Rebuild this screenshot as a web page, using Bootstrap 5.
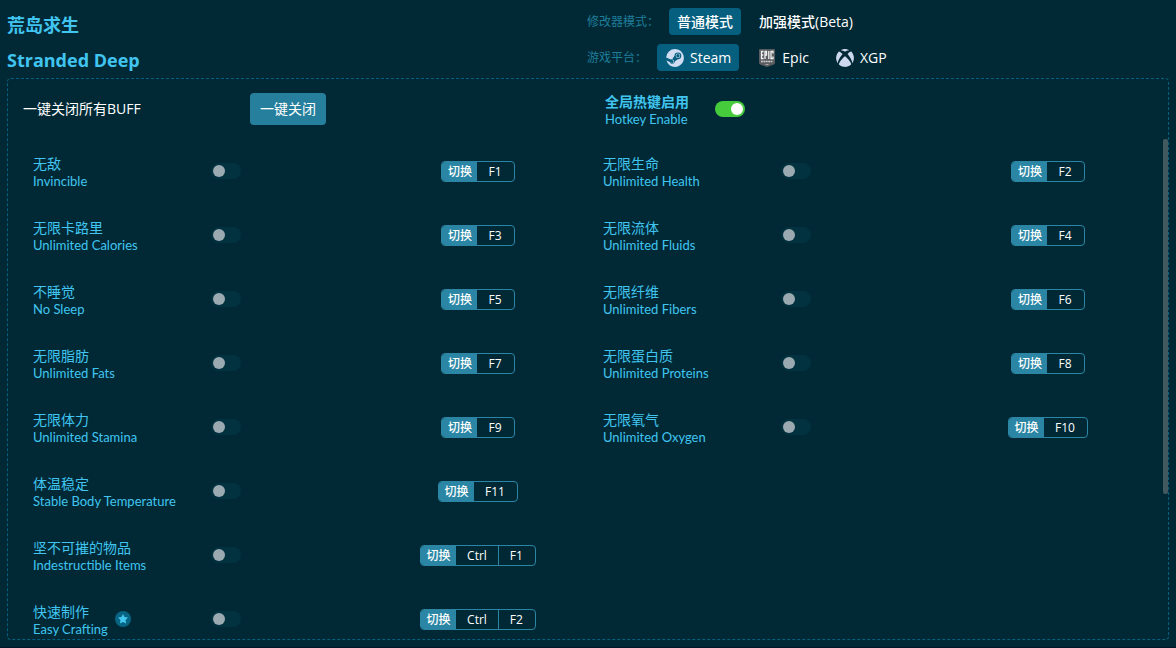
<!DOCTYPE html>
<html lang="zh-CN">
<head>
<meta charset="utf-8">
<meta name="viewport" content="width=device-width, initial-scale=1">
<title>荒岛求生 Stranded Deep</title>
<link href="https://cdn.jsdelivr.net/npm/bootstrap@5.3.0/dist/css/bootstrap.min.css" rel="stylesheet">
<style>
:root { --ink: #002935; --sky: #41c5f0; --deep: #065f7f; --teal: #267f9d; }
body { background: var(--ink); color: #fff; font: 14px/20px "Open Sans", "Noto Sans CJK SC", sans-serif; }
.shell { height: 100vh; padding: 8px 7px 7px; border-bottom: 1px solid #001626; }
.top-bar { padding-right: 2px; }
.game-title { color: var(--sky); font-weight: 700; line-height: 35px; margin: 0; font-size: 18px; }
.picker-col { gap: 9px; }
.picker { gap: 10px; border: 0; height: 27px; }
.picker-name { color: #1f7d9a; font-size: 12px; }
.pick { --bs-btn-padding-x: 8px; --bs-btn-padding-y: 0; --bs-btn-font-size: 14px; --bs-btn-line-height: 27px;
  --bs-btn-color: #fff; --bs-btn-border-width: 0; --bs-btn-hover-color: #fff; --bs-btn-active-bg: var(--deep); --bs-btn-active-color: #fff;
  --bs-btn-border-radius: 4px; font-weight: 500; height: 27px; display: inline-flex; align-items: center; gap: 5px; }
.pick svg { width: 20px; height: 20px; }
.panel { border: 1px dashed var(--deep); border-radius: 4px; min-height: 0; }
.panel-head { height: 60px; }
.close-name { padding-left: 15px; width: 242px; }
.close-btn { --bs-btn-bg: var(--teal); --bs-btn-color: #fff; --bs-btn-hover-bg: #3191b1; --bs-btn-hover-color: #fff; --bs-btn-border-width: 0;
  --bs-btn-padding-x: 10px; --bs-btn-padding-y: 0; --bs-btn-font-size: 14px; --bs-btn-line-height: 32px; --bs-btn-border-radius: 4px; }
.hot-name { padding-left: 17px; width: 127px; }
.label-pair { color: var(--sky); font-family: Lato, "Noto Sans CJK SC", sans-serif; line-height: 18px; font-size: 13px; padding-top: 3px; }
.label-pair b, .label-pair i { display: block; font-style: normal; font-size: 14px; line-height: 17px; }
.label-pair i { font-weight: 400; }
.list-area { min-height: 0; padding-right: 20px; }
.cheat { height: 64px; padding-left: 25px; }
.cheat-name { width: 178px; gap: 7px; }
.keys-cell { width: 200px; }
.toggle.form-check-input { float: none; width: 30px; height: 16px; margin: 0; border: 0; border-radius: 8px; background-color: #02323f; flex: none;
  --bs-form-switch-bg: url("data:image/svg+xml,%3csvg xmlns='http://www.w3.org/2000/svg' viewBox='-4 -4 8 8'%3e%3ccircle r='3' fill='%239aaab0'/%3e%3c/svg%3e"); }
.toggle.form-check-input:checked { background-color: #45cb3b;
  --bs-form-switch-bg: url("data:image/svg+xml,%3csvg xmlns='http://www.w3.org/2000/svg' viewBox='-4 -4 8 8'%3e%3ccircle r='3' fill='%23fff'/%3e%3c/svg%3e"); }
.hotkey { display: inline-flex; padding: 0; height: 21px; border: 1px solid #2a86a4; border-radius: 4px; background: none; overflow: hidden;
  color: #fff; font-size: 12px; line-height: 19px; font-weight: 500; }
.hotkey span { padding: 0 12px 0 11px; }
.hotkey span:first-child { background: #2a86a4; width: 35px; padding: 0; text-align: center; }
.hotkey span:nth-child(3) { border-left: 1px solid #2a86a4; }
.hotkey.combo span:nth-child(2) { padding: 0 11px; }
.star-badge { width: 16px; height: 16px; }
.scroll-thumb { right: 0; top: 60px; width: 5px; height: 355px; border-radius: 2px; background: #42595f; }
</style>
</head>
<body>
<div class="shell d-flex flex-column">
  <header class="top-bar row g-0">
    <div class="col-6">
      <h1 class="game-title">荒岛求生</h1>
      <h2 class="game-title">Stranded Deep</h2>
    </div>
    <div class="picker-col col-6 d-flex flex-column">
      <div class="picker d-flex align-items-center" role="group" aria-label="修改器模式">
        <span class="picker-name">修改器模式：</span>
        <div><input class="btn-check" type="radio" name="mode" id="m1" checked><label class="btn pick" for="m1">普通模式</label></div>
        <div><input class="btn-check" type="radio" name="mode" id="m2"><label class="btn pick" for="m2">加强模式(Beta)</label></div>
      </div>
      <div class="picker d-flex align-items-center" role="group" aria-label="游戏平台">
        <span class="picker-name">游戏平台：</span>
        <div><input class="btn-check" type="radio" name="plat" id="p1" checked><label class="btn pick" for="p1">
          <svg viewBox="-1 -1 18 18" fill="#cfdcf1"><path d="M.329 10.333A8.01 8.01 0 0 0 7.99 16C12.414 16 16 12.418 16 8s-3.586-8-8.009-8A8.006 8.006 0 0 0 0 7.468l.003.006 4.304 1.769A2.198 2.198 0 0 1 5.62 8.88l1.96-2.844-.001-.04a3.046 3.046 0 0 1 3.042-3.043 3.046 3.046 0 0 1 3.042 3.043 3.047 3.047 0 0 1-3.111 3.044l-2.804 2a2.223 2.223 0 0 1-3.075 2.11 2.217 2.217 0 0 1-1.312-1.568L.33 10.333Z"/><path d="M4.868 12.683a1.715 1.715 0 0 0 1.318-3.165 1.705 1.705 0 0 0-1.263-.02l1.023.424a1.261 1.261 0 1 1-.97 2.33l-.99-.41a1.7 1.7 0 0 0 .882.84Zm3.726-6.687a2.03 2.03 0 0 0 2.027 2.029 2.03 2.03 0 0 0 2.027-2.029 2.03 2.03 0 0 0-2.027-2.027 2.03 2.03 0 0 0-2.027 2.027m2.03-1.527a1.524 1.524 0 1 1-.002 3.048 1.524 1.524 0 0 1 .002-3.048"/></svg>Steam</label></div>
        <div><input class="btn-check" type="radio" name="plat" id="p2"><label class="btn pick" for="p2">
          <svg viewBox="0 0 20 20"><path d="M3 1h14q1 0 1 1v13q0 1-1 1.400L10 19l-7-2.600Q2 16 2 15V2q0-1 1-1Z" fill="#5a5d60"/><g fill="none" stroke="#f2f2f2" stroke-width="1.300"><path d="M6.500 3.500H4.500v7h2M4.500 7h1.800M8 11V3.500h1.500v3.700H8M11.800 3v8M16 5.500v-2h-2v7h2v-2"/></g><path d="M4 13.500h12" stroke="#d0d0d0" stroke-width="1.400" stroke-dasharray="1.800 .6"/><path d="M7.500 16h5L10 17Z" fill="#bbb"/></svg>Epic</label></div>
        <div><input class="btn-check" type="radio" name="plat" id="p3"><label class="btn pick" for="p3">
          <svg viewBox="-1 -1 18 18" fill="#cdd8ee"><path d="M7.202 15.967a8 8 0 0 1-3.552-1.26c-.898-.585-1.101-.826-1.101-1.306 0-.965 1.062-2.656 2.879-4.583C6.459 7.723 7.897 6.44 8.052 6.475c.302.068 2.718 2.423 3.622 3.531 1.43 1.753 2.088 3.189 1.754 3.829-.254.486-1.83 1.437-2.987 1.802-.954.301-2.207.429-3.239.33m-5.866-3.57C.589 11.253.212 10.127.03 8.497c-.06-.539-.038-.846.137-1.95.218-1.377 1.002-2.97 1.945-3.95.401-.417.437-.427.926-.263.595.2 1.23.638 2.213 1.528l.574.519-.313.385C4.056 6.553 2.52 9.086 1.94 10.653c-.315.852-.442 1.707-.306 2.063.091.24.007.15-.3-.319Zm13.101.195c.074-.36-.019-1.02-.238-1.687-.473-1.443-2.055-4.128-3.508-5.953l-.457-.575.494-.454c.646-.593 1.095-.948 1.58-1.25.381-.237.927-.448 1.161-.448.145 0 .654.528 1.065 1.104a8.4 8.4 0 0 1 1.343 3.102c.153.728.166 2.286.024 3.012a9.5 9.5 0 0 1-.6 1.893c-.179.393-.624 1.156-.82 1.404-.1.128-.1.127-.043-.148ZM7.335 1.952c-.67-.34-1.704-.705-2.276-.803a4 4 0 0 0-.759-.043c-.471.024-.45 0 .306-.358A7.8 7.8 0 0 1 6.47.128c.8-.169 2.306-.17 3.094-.005.85.18 1.853.552 2.418.9l.168.103-.385-.02c-.766-.038-1.88.27-3.078.853-.361.176-.676.316-.699.312a12 12 0 0 1-.654-.319Z"/></svg>XGP</label></div>
      </div>
    </div>
  </header>

  <main class="panel position-relative flex-grow-1 d-flex flex-column">
    <div class="panel-head row g-0 flex-shrink-0">
      <div class="col-6 d-flex align-items-center">
        <span class="close-name">一键关闭所有BUFF</span>
        <button type="button" class="btn close-btn">一键关闭</button>
      </div>
      <div class="col-6 d-flex align-items-center form-switch ps-0">
        <label class="hot-name label-pair" for="hk"><b>全局热键启用</b>Hotkey Enable</label>
        <input class="form-check-input toggle" type="checkbox" role="switch" id="hk" checked>
      </div>
    </div>
    <div class="list-area row g-0 flex-grow-1 overflow-hidden">
      <div class="col-6">
        <div class="cheat form-switch d-flex align-items-center"><div class="cheat-name d-flex align-items-center"><label class="label-pair" for="c1"><i>无敌</i>Invincible</label></div><input class="form-check-input toggle" type="checkbox" role="switch" id="c1"><div class="keys-cell ms-auto text-center"><button type="button" class="hotkey"><span>切换</span><span>F1</span></button></div></div>
        <div class="cheat form-switch d-flex align-items-center"><div class="cheat-name d-flex align-items-center"><label class="label-pair" for="c3"><i>无限卡路里</i>Unlimited Calories</label></div><input class="form-check-input toggle" type="checkbox" role="switch" id="c3"><div class="keys-cell ms-auto text-center"><button type="button" class="hotkey"><span>切换</span><span>F3</span></button></div></div>
        <div class="cheat form-switch d-flex align-items-center"><div class="cheat-name d-flex align-items-center"><label class="label-pair" for="c5"><i>不睡觉</i>No Sleep</label></div><input class="form-check-input toggle" type="checkbox" role="switch" id="c5"><div class="keys-cell ms-auto text-center"><button type="button" class="hotkey"><span>切换</span><span>F5</span></button></div></div>
        <div class="cheat form-switch d-flex align-items-center"><div class="cheat-name d-flex align-items-center"><label class="label-pair" for="c7"><i>无限脂肪</i>Unlimited Fats</label></div><input class="form-check-input toggle" type="checkbox" role="switch" id="c7"><div class="keys-cell ms-auto text-center"><button type="button" class="hotkey"><span>切换</span><span>F7</span></button></div></div>
        <div class="cheat form-switch d-flex align-items-center"><div class="cheat-name d-flex align-items-center"><label class="label-pair" for="c9"><i>无限体力</i>Unlimited Stamina</label></div><input class="form-check-input toggle" type="checkbox" role="switch" id="c9"><div class="keys-cell ms-auto text-center"><button type="button" class="hotkey"><span>切换</span><span>F9</span></button></div></div>
        <div class="cheat form-switch d-flex align-items-center"><div class="cheat-name d-flex align-items-center"><label class="label-pair" for="c11"><i>体温稳定</i>Stable Body Temperature</label></div><input class="form-check-input toggle" type="checkbox" role="switch" id="c11"><div class="keys-cell ms-auto text-center"><button type="button" class="hotkey"><span>切换</span><span>F11</span></button></div></div>
        <div class="cheat form-switch d-flex align-items-center"><div class="cheat-name d-flex align-items-center"><label class="label-pair" for="c12"><i>坚不可摧的物品</i>Indestructible Items</label></div><input class="form-check-input toggle" type="checkbox" role="switch" id="c12"><div class="keys-cell ms-auto text-center"><button type="button" class="hotkey combo"><span>切换</span><span>Ctrl</span><span>F1</span></button></div></div>
        <div class="cheat form-switch d-flex align-items-center"><div class="cheat-name d-flex align-items-center"><label class="label-pair" for="c13"><i>快速制作</i>Easy Crafting</label><svg class="star-badge" viewBox="0 0 16 16"><circle cx="8" cy="8" r="8" fill="#086483"/><path d="m8 3 1.500 3.100 3.500.500-2.500 2.400.600 3.500L8 10.900l-3.100 1.600.600-3.500L3 6.600l3.500-.500Z" fill="#45c8f0"/></svg></div><input class="form-check-input toggle" type="checkbox" role="switch" id="c13"><div class="keys-cell ms-auto text-center"><button type="button" class="hotkey combo"><span>切换</span><span>Ctrl</span><span>F2</span></button></div></div>
      </div>
      <div class="col-6">
        <div class="cheat form-switch d-flex align-items-center"><div class="cheat-name d-flex align-items-center"><label class="label-pair" for="c2"><i>无限生命</i>Unlimited Health</label></div><input class="form-check-input toggle" type="checkbox" role="switch" id="c2"><div class="keys-cell ms-auto text-center"><button type="button" class="hotkey"><span>切换</span><span>F2</span></button></div></div>
        <div class="cheat form-switch d-flex align-items-center"><div class="cheat-name d-flex align-items-center"><label class="label-pair" for="c4"><i>无限流体</i>Unlimited Fluids</label></div><input class="form-check-input toggle" type="checkbox" role="switch" id="c4"><div class="keys-cell ms-auto text-center"><button type="button" class="hotkey"><span>切换</span><span>F4</span></button></div></div>
        <div class="cheat form-switch d-flex align-items-center"><div class="cheat-name d-flex align-items-center"><label class="label-pair" for="c6"><i>无限纤维</i>Unlimited Fibers</label></div><input class="form-check-input toggle" type="checkbox" role="switch" id="c6"><div class="keys-cell ms-auto text-center"><button type="button" class="hotkey"><span>切换</span><span>F6</span></button></div></div>
        <div class="cheat form-switch d-flex align-items-center"><div class="cheat-name d-flex align-items-center"><label class="label-pair" for="c8"><i>无限蛋白质</i>Unlimited Proteins</label></div><input class="form-check-input toggle" type="checkbox" role="switch" id="c8"><div class="keys-cell ms-auto text-center"><button type="button" class="hotkey"><span>切换</span><span>F8</span></button></div></div>
        <div class="cheat form-switch d-flex align-items-center"><div class="cheat-name d-flex align-items-center"><label class="label-pair" for="c10"><i>无限氧气</i>Unlimited Oxygen</label></div><input class="form-check-input toggle" type="checkbox" role="switch" id="c10"><div class="keys-cell ms-auto text-center"><button type="button" class="hotkey"><span>切换</span><span>F10</span></button></div></div>
      </div>
    </div>
    <div class="scroll-thumb position-absolute"></div>
  </main>
</div>
<script src="https://cdn.jsdelivr.net/npm/bootstrap@5.3.0/dist/js/bootstrap.bundle.min.js"></script>
</body>
</html>
